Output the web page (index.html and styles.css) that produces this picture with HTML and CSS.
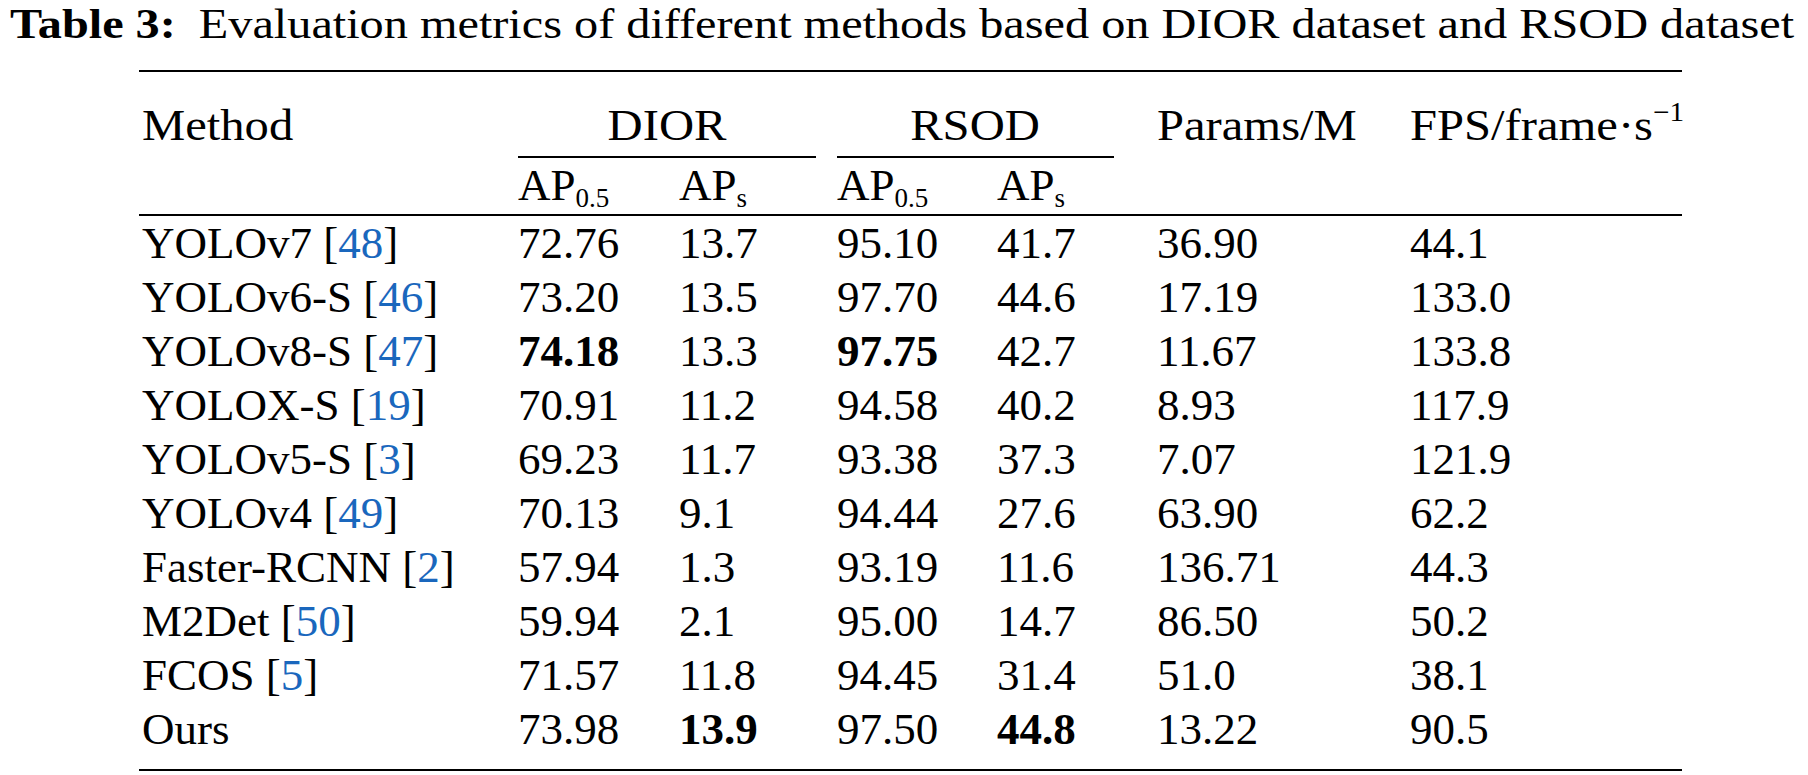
FILE: index.html
```html
<!DOCTYPE html>
<html lang="en">
<head>
<meta charset="utf-8">
<title>Table 3</title>
<link rel="stylesheet" href="styles.css">
</head>
<body>
<div class="page">
  <div class="caption"><b class="label">Table 3:</b>Evaluation metrics of different methods based on DIOR dataset and RSOD dataset</div>
  <div class="table">
    <div class="rule"></div>
    <div class="grid head">
      <div class="c first"><span class="t">Method</span></div>
      <div class="group dior"><span class="t">DIOR</span></div>
      <div class="group rsod"><span class="t">RSOD</span></div>
      <div class="c"><span class="t">Params/M</span></div>
      <div class="c"><span class="t">FPS/frame·s<sup>−1</sup></span></div>
      <div class="c first"></div>
      <div class="c">AP<sub>0.5</sub></div>
      <div class="c">AP<sub>s</sub></div>
      <div class="c">AP<sub>0.5</sub></div>
      <div class="c">AP<sub>s</sub></div>
      <div class="c"></div>
      <div class="c"></div>
    </div>
    <div class="rule mid"></div>
    <div class="grid body">
      <div class="c first">YOLOv7 [<span class="ref">48</span>]</div><div class="c">72.76</div><div class="c">13.7</div><div class="c">95.10</div><div class="c">41.7</div><div class="c">36.90</div><div class="c">44.1</div>
      <div class="c first">YOLOv6-S [<span class="ref">46</span>]</div><div class="c">73.20</div><div class="c">13.5</div><div class="c">97.70</div><div class="c">44.6</div><div class="c">17.19</div><div class="c">133.0</div>
      <div class="c first">YOLOv8-S [<span class="ref">47</span>]</div><div class="c best">74.18</div><div class="c">13.3</div><div class="c best">97.75</div><div class="c">42.7</div><div class="c">11.67</div><div class="c">133.8</div>
      <div class="c first">YOLOX-S [<span class="ref">19</span>]</div><div class="c">70.91</div><div class="c">11.2</div><div class="c">94.58</div><div class="c">40.2</div><div class="c">8.93</div><div class="c">117.9</div>
      <div class="c first">YOLOv5-S [<span class="ref">3</span>]</div><div class="c">69.23</div><div class="c">11.7</div><div class="c">93.38</div><div class="c">37.3</div><div class="c">7.07</div><div class="c">121.9</div>
      <div class="c first">YOLOv4 [<span class="ref">49</span>]</div><div class="c">70.13</div><div class="c">9.1</div><div class="c">94.44</div><div class="c">27.6</div><div class="c">63.90</div><div class="c">62.2</div>
      <div class="c first">Faster-RCNN [<span class="ref">2</span>]</div><div class="c">57.94</div><div class="c">1.3</div><div class="c">93.19</div><div class="c">11.6</div><div class="c">136.71</div><div class="c">44.3</div>
      <div class="c first">M2Det [<span class="ref">50</span>]</div><div class="c">59.94</div><div class="c">2.1</div><div class="c">95.00</div><div class="c">14.7</div><div class="c">86.50</div><div class="c">50.2</div>
      <div class="c first">FCOS [<span class="ref">5</span>]</div><div class="c">71.57</div><div class="c">11.8</div><div class="c">94.45</div><div class="c">31.4</div><div class="c">51.0</div><div class="c">38.1</div>
      <div class="c first">Ours</div><div class="c">73.98</div><div class="c best">13.9</div><div class="c">97.50</div><div class="c best">44.8</div><div class="c">13.22</div><div class="c">90.5</div>
    </div>
    <div class="rule bottom"></div>
  </div>
</div>
</body>
</html>
```
FILE: styles.css
```css
html, body {
  margin: 0;
  padding: 0;
  background: #ffffff;
}

.page {
  font-family: "Liberation Serif", "Times New Roman", serif;
  color: #000000;
  width: 1808px;
  height: 775px;
  overflow: hidden;
}

.caption {
  font-size: 42px;
  line-height: 48px;
  margin-left: 10px;
  white-space: nowrap;
  transform: scaleX(1.149);
  transform-origin: left center;
}

.caption .label {
  font-weight: bold;
  margin-right: 20px;
}

.table {
  margin-left: 139px;
  width: 1543px;
  margin-top: 22px;
  font-size: 45px;
  line-height: 54px;
}

.rule {
  height: 2px;
  background: #000000;
}

.rule.mid {
  margin-top: 2px;
}

.rule.bottom {
  margin-top: 13px;
}

.grid {
  display: grid;
  grid-template-columns: 379px 161px 158px 160px 160px 253px 272px;
}

.head {
  padding-top: 26px;
}

.head .t {
  display: inline-block;
  transform: scaleX(1.08);
  transform-origin: left center;
}

.head .group .t {
  transform-origin: center center;
}

.c {
  white-space: nowrap;
}

.c.first {
  padding-left: 3px;
}

.group {
  grid-column: span 2;
  text-align: center;
  border-bottom: 2px solid #000000;
  padding-bottom: 4px;
}

.group.dior {
  margin-right: 21px;
}

.group.rsod {
  margin-right: 43px;
}

sub, sup {
  font-size: 27px;
  line-height: 0;
  position: relative;
  vertical-align: baseline;
}

sub {
  top: 7px;
}

sup {
  top: -19px;
}

.ref {
  color: #1a67bd;
}

.best {
  font-weight: bold;
}
```
